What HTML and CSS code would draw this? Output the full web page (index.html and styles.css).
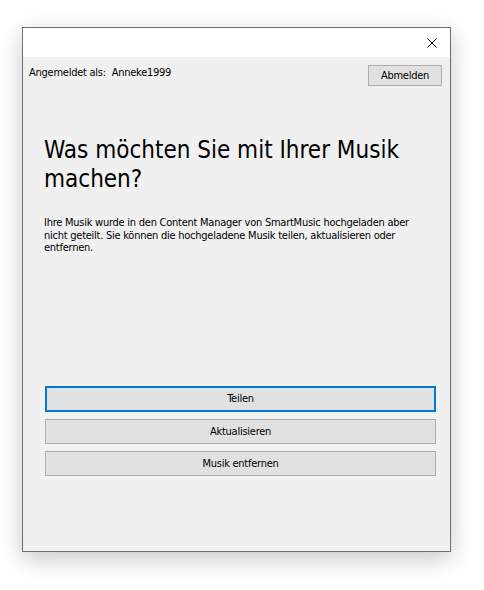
FILE: index.html
```html
<!DOCTYPE html>
<html lang="de">
<head>
<meta charset="UTF-8">
<meta name="viewport" content="width=device-width, initial-scale=1.0">
<title>SmartMusic</title>
<link rel="stylesheet" href="styles.css">
</head>
<body>

<div class="window">
    <div class="titlebar">
        <button class="close" type="button" aria-label="Schließen">
            <svg width="10" height="10" viewBox="0 0 10 10">
                <path d="M0.5 0.5 L9.5 9.5 M9.5 0.5 L0.5 9.5" stroke="#000" stroke-width="1" fill="none"/>
            </svg>
        </button>
    </div>
    <div class="content">
        <div class="account">
            <span class="account-name">Angemeldet als:&nbsp; Anneke1999</span>
            <button class="btn btn-small" type="button">Abmelden</button>
        </div>
        <h1>Was möchten Sie mit Ihrer Musik machen?</h1>
        <p class="info">Ihre Musik wurde in den Content Manager von SmartMusic hochgeladen aber nicht geteilt. Sie können die hochgeladene Musik teilen, aktualisieren oder entfernen.</p>
        <div class="actions">
            <button class="btn btn-wide btn-default" type="button">Teilen</button>
            <button class="btn btn-wide" type="button">Aktualisieren</button>
            <button class="btn btn-wide" type="button">Musik entfernen</button>
        </div>
    </div>
</div>

</body>
</html>
```

FILE: styles.css
```css
body {
    margin: 0;
    padding: 0 0 38px 0;
    background-color: #ffffff;
    font-family: "DejaVu Sans Condensed", "DejaVu Sans", sans-serif;
    font-stretch: condensed;
    font-size: 11px;
    letter-spacing: -0.25px;
    color: #000000;
}
.window {
    width: 429px;
    height: 525px;
    margin: 27px 0 0 22px;
    border: 1px solid #707070;
    box-sizing: border-box;
    display: flex;
    flex-direction: column;
    background-color: #f0f0f0;
    box-shadow: 0px 7px 22px rgba(0, 0, 0, 0.22);
}
.titlebar {
    height: 29px;
    background-color: #ffffff;
    display: flex;
    justify-content: flex-end;
    align-items: center;
}
.close {
    width: 30px;
    height: 29px;
    margin-right: 3px;
    padding: 0;
    border: none;
    background: none;
    display: flex;
    align-items: center;
    justify-content: center;
}
.content {
    flex: 1;
    display: flex;
    flex-direction: column;
    padding: 8px 8px 0 6px;
}
.account {
    display: flex;
    justify-content: space-between;
    align-items: flex-start;
}
.account-name {
    padding-top: 1px;
}
.btn {
    font-family: inherit;
    font-stretch: condensed;
    font-size: 11px;
    letter-spacing: -0.25px;
    color: #000000;
    background-color: #e1e1e1;
    border: 1px solid #adadad;
    padding: 0;
    box-sizing: border-box;
}
.btn-small {
    width: 74px;
    height: 21px;
}
h1 {
    font-size: 24px;
    font-weight: normal;
    letter-spacing: 0;
    line-height: 29px;
    margin: 50px 0 0 15px;
    padding-right: 20px;
}
.info {
    margin: 23px 0 0 15px;
    line-height: 12.5px;
    padding-right: 10px;
}
.actions {
    display: flex;
    flex-direction: column;
    gap: 7px;
    margin: 131px 6px 0 16px;
}
.btn-wide {
    width: 100%;
    height: 25px;
}
.btn-default {
    height: 26px;
    border: 2px solid #0078d7;
}
```
